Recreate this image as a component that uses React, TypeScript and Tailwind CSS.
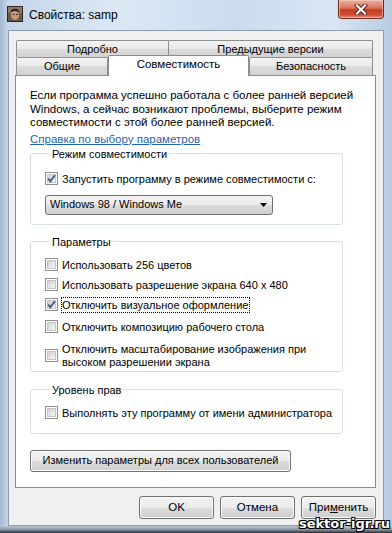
import type { ReactNode } from "react";

function Check({ checked }: { checked?: boolean }) {
	return (
		<span className="relative flex h-[13px] w-[13px] shrink-0 items-center justify-center border border-[#8e8f8f] bg-white">
			<span className="h-[9px] w-[9px] border border-[#c4c4c4] bg-[linear-gradient(135deg,#d0d0d0,#f7f7f7)]" />
			{checked && (
				<svg className="absolute left-0 top-0" width="11" height="11" viewBox="0 0 11 11">
					<path d="M2.2 5.6 L4.4 8.2 L8.9 2.2" fill="none" stroke="#3f5784" strokeWidth="1.9" />
				</svg>
			)}
		</span>
	);
}

function Row({
	checked,
	className = "",
	children,
}: {
	checked?: boolean;
	className?: string;
	children: ReactNode;
}) {
	return (
		<div className={`flex items-center gap-[4px] whitespace-nowrap ${className}`}>
			<Check checked={checked} />
			{children}
		</div>
	);
}

function Btn({ className = "", children }: { className?: string; children: ReactNode }) {
	return (
		<div
			className={`flex h-[22px] items-center justify-center whitespace-nowrap rounded-[3px] border border-[#707070] bg-[linear-gradient(#f2f2f2,#ebebeb_50%,#dddddd_50%,#cfcfcf)] shadow-[inset_0_0_0_1px_#fcfcfc] ${className}`}
		>
			{children}
		</div>
	);
}

export default function App() {
	return (
		<div className="relative flex h-[533px] w-[392px] flex-col overflow-hidden bg-[linear-gradient(90deg,#a3b9d1,#c4d6e9_2%,#dce8f4_30%,#cadcef_60%,#d9e6f3_85%,#b8cbe0)] font-['Liberation_Sans',Arial,sans-serif] text-[11px] text-black">
			{/* title bar */}
			<div className="flex h-[30px] shrink-0 items-start">
				<svg className="ml-[7px] mt-[6px]" width="16" height="16" viewBox="0 0 16 16">
					<rect x="0.5" y="0.5" width="15" height="15" fill="#6d5a48" stroke="#2e261f" />
					<rect x="1" y="1" width="14" height="6" fill="#8d7a66" />
					<ellipse cx="8" cy="9" rx="4.2" ry="5" fill="#c49a78" />
					<path d="M3.5 7 Q4 2.5 8 2.8 Q12 2.5 12.5 7 Q10.5 4.8 8 5 Q5.5 4.8 3.5 7Z" fill="#2c211a" />
					<rect x="5.5" y="8" width="2" height="1" fill="#3a2a20" />
					<rect x="9" y="8" width="2" height="1" fill="#3a2a20" />
				</svg>
				<span className="ml-[6px] mt-[7px] text-[12px] leading-[16px]">Свойства: samp</span>
				<div className="ml-auto mr-[8px] flex h-[19px] w-[46px] items-center justify-center rounded-b-[4px] border border-t-0 border-[#6e2a20] bg-[linear-gradient(#eab0a2,#d9735d_45%,#c53a22_55%,#d0553a_85%,#e79a7c)] shadow-[inset_0_0_0_1px_rgba(255,220,210,0.5)]">
					<svg width="14" height="11" viewBox="0 0 14 11">
						<path d="M3 1.5 L11 9.5 M11 1.5 L3 9.5" stroke="#5a1a12" strokeWidth="4" strokeLinecap="square" />
						<path d="M3 1.5 L11 9.5 M11 1.5 L3 9.5" stroke="#ffffff" strokeWidth="2.2" strokeLinecap="square" />
					</svg>
				</div>
			</div>

			{/* dialog body */}
			<div className="mx-[8px] flex h-[496px] shrink-0 flex-col border border-[#8d9cad] bg-[#f0f0f0] pl-[6px] pr-[7px] pt-[9px]">
				{/* tabs */}
				<div className="ml-[1px] mr-[3px] flex h-[17px]">
					<div className="flex w-[153px] items-center justify-center rounded-t-[2px] border border-b-0 border-[#8e8f8f] bg-[linear-gradient(#f3f3f3,#e9e9e9_50%,#dcdcdc_50%,#d2d2d2)]">
						Подробно
					</div>
					<div className="-ml-px flex flex-1 items-center justify-center rounded-t-[2px] border border-b-0 border-[#8e8f8f] bg-[linear-gradient(#f3f3f3,#e9e9e9_50%,#dcdcdc_50%,#d2d2d2)]">
						Предыдущие версии
					</div>
				</div>
				<div className="ml-[1px] mr-[3px] flex h-[18px]">
					<div className="flex w-[92px] items-center justify-center rounded-t-[2px] border border-b-0 border-[#8e8f8f] bg-[linear-gradient(#f3f3f3,#e9e9e9_50%,#dcdcdc_50%,#d2d2d2)]">
						Общие
					</div>
					<div className="relative z-10 -mb-px -mt-[2px] flex h-[21px] w-[141px] items-center justify-center rounded-t-[2px] border border-b-0 border-[#898c95] bg-white pb-[2px] text-[11.5px]">
						Совместимость
					</div>
					<div className="flex flex-1 items-center justify-center rounded-t-[2px] border border-b-0 border-[#8e8f8f] bg-[linear-gradient(#f3f3f3,#e9e9e9_50%,#dcdcdc_50%,#d2d2d2)]">
						Безопасность
					</div>
				</div>

				{/* panel */}
				<div className="flex h-[413px] flex-col border border-[#898c95] bg-white px-[14px] pt-[13px]">
					<p className="whitespace-nowrap text-[11.5px] leading-[13.5px]">
						Если программа успешно работала с более ранней версией
						<br />
						Windows, а сейчас возникают проблемы, выберите режим
						<br />
						совместимости с этой более ранней версией.
					</p>
					<a className="mt-[2px] self-start text-[11.5px] leading-[14px] text-[#1f66b0] underline underline-offset-[1px]">
						Справка по выбору параметров
					</a>

					<fieldset className="mt-[1px] w-[313px] min-w-0 rounded-[3px] border border-[#d5dfe5] pb-[9px] pl-[14px]">
						<legend className="ml-[5px] px-[2px] leading-[14px]">Режим совместимости</legend>
						<Row className="mt-[11px] leading-[14px]" checked>
							<span>Запустить программу в режиме совместимости с:</span>
						</Row>
						<div className="mt-[9px] flex h-[20px] w-[228px] items-center justify-between rounded-[3px] border border-[#707070] bg-[linear-gradient(#f2f2f2,#ebebeb_50%,#dddddd_50%,#cfcfcf)] pl-[4px] pr-[5px]">
							<span>Windows 98 / Windows Me</span>
							<svg width="7" height="4" viewBox="0 0 7 4">
								<path d="M0 0 H7 L3.5 4Z" fill="#000" />
							</svg>
						</div>
					</fieldset>

					<fieldset className="mt-[10px] w-[313px] min-w-0 rounded-[3px] border border-[#d5dfe5] pb-[2px] pl-[14px]">
						<legend className="ml-[5px] px-[2px] leading-[14px]">Параметры</legend>
						<Row className="mt-[9px] leading-[14px]">
							<span>Использовать 256 цветов</span>
						</Row>
						<Row className="mt-[6px] leading-[14px]">
							<span>Использовать разрешение экрана 640 x 480</span>
						</Row>
						<Row className="mt-[6px] leading-[14px]" checked>
							<span className="pr-[1px] outline-1 outline-dotted outline-black">
								Отключить визуальное оформление
							</span>
						</Row>
						<Row className="mt-[8px] leading-[14px]">
							<span>Отключить композицию рабочего стола</span>
						</Row>
						<Row className="mt-[9px] leading-[13px]">
							<span>
								Отключить масштабирование изображения при
								<br />
								высоком разрешении экрана
							</span>
						</Row>
					</fieldset>

					<fieldset className="mt-[11px] w-[313px] min-w-0 rounded-[3px] border border-[#d5dfe5] pb-[13px] pl-[14px]">
						<legend className="ml-[5px] px-[2px] leading-[14px]">Уровень прав</legend>
						<Row className="mt-[9px] leading-[14px]">
							<span>Выполнять эту программу от имени администратора</span>
						</Row>
					</fieldset>

					<Btn className="mt-[16px] h-[21px] w-[261px]">Изменить параметры для всех пользователей</Btn>
				</div>

				{/* bottom buttons */}
				<div className="mt-[8px] flex justify-end gap-[6px] text-[11.5px]">
					<Btn className="h-[23px] w-[75px] border-[#3c7fb1] shadow-[inset_0_0_0_1px_#9fdcf7]">OK</Btn>
					<Btn className="h-[23px] w-[75px]">Отмена</Btn>
					<Btn className="h-[23px] w-[75px]">
						<span>
							При<span className="underline">м</span>енить
						</span>
					</Btn>
				</div>
			</div>

			{/* bottom frame */}
			<div className="h-[7px] shrink-0 bg-[linear-gradient(#b7c8d9,#8796a6_50%,#2a2e35)]" />

			<span className="absolute right-[2px] top-[516px] font-['DejaVu_Sans',sans-serif] text-[13px] font-bold leading-[15px] text-white [text-shadow:-1px_-1px_0_#000,1px_-1px_0_#000,-1px_1px_0_#000,1px_1px_0_#000]">
				sektor-igr.ru
			</span>
		</div>
	);
}
